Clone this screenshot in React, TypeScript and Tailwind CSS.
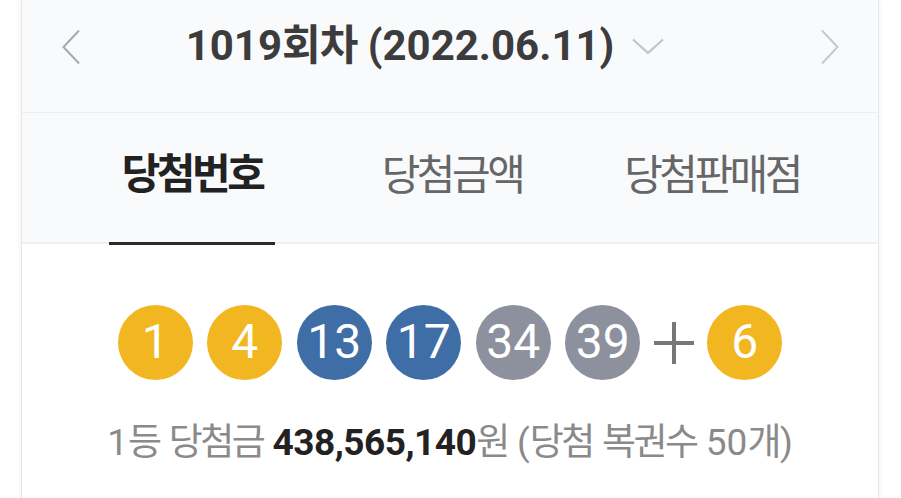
import React from "react";

const FONT = "font-['Roboto','Noto_Sans_CJK_KR',sans-serif]";

type Ball = { n: number; color: string };

const balls: Ball[] = [
  { n: 1, color: "bg-[#f2b720]" },
  { n: 4, color: "bg-[#f2b720]" },
  { n: 13, color: "bg-[#3f6ea7]" },
  { n: 17, color: "bg-[#3f6ea7]" },
  { n: 34, color: "bg-[#8d919d]" },
  { n: 39, color: "bg-[#8d919d]" },
];

function NumberBall({ n, color }: Ball) {
  return (
    <div
      className={`${color} w-[75px] h-[75px] rounded-full flex items-center justify-center text-white text-[48px] leading-none`}
    >
      <span className="-mt-[2px]">{n}</span>
    </div>
  );
}

function Kr({ children, ls }: { children: React.ReactNode; ls: string }) {
  return <span className={ls}>{children}</span>;
}

export default function App() {
  return (
    <div className={`${FONT} bg-white w-[901px] h-[498px] overflow-hidden`}>
      <div className="ml-[21px] w-[858px] h-full bg-white border-x border-[#e6e7e9] shadow-[0_0_6px_rgba(0,0,0,0.07)]">
        {/* round selector */}
        <div className="h-[113px] bg-[#f9fafc] border-b border-[#eceef1] flex items-center pl-[39px] pr-[38px] pb-[18px]">
          <svg width="20" height="36" viewBox="0 0 20 36" className="shrink-0">
            <path d="M18 1.5 L2.5 18 L18 34.5" fill="none" stroke="#a9a9a9" strokeWidth="2" />
          </svg>
          <div className="flex-1 flex items-center justify-center pr-[51px]">
            <span className="text-[42px] font-bold text-[#3c3c3c] leading-none -mt-[2px]">
              1019<Kr ls="tracking-[-1px]">회차</Kr> (2022.06.11)
            </span>
            <svg width="32" height="17" viewBox="0 0 32 17" className="ml-[18px] -mt-[2px]">
              <path d="M1 1.5 L16 15 L31 1.5" fill="none" stroke="#c4c4c4" strokeWidth="2.2" />
            </svg>
          </div>
          <svg width="20" height="36" viewBox="0 0 20 36" className="shrink-0">
            <path d="M2 1.5 L17.5 18 L2 34.5" fill="none" stroke="#c8c8c8" strokeWidth="2" />
          </svg>
        </div>

        {/* tabs */}
        <div className="h-[131px] bg-[#f9fafc] border-b-2 border-[#eef0f2] grid grid-cols-[260px_260px_260px] pl-[40px]">
          <div className="flex justify-center">
            <div className="flex items-center px-[13px] border-b-[3px] border-[#2b2b2b] -mb-[3px]">
              <span className="text-[42px] font-bold text-[#222] tracking-[-3.5px] leading-none -mt-[6px]">
                당첨번호
              </span>
            </div>
          </div>
          <div className="flex items-center justify-center">
            <span className="text-[42px] text-[#666] tracking-[-3.5px] leading-none -mt-[3px]">당첨금액</span>
          </div>
          <div className="flex items-center justify-center">
            <span className="text-[42px] text-[#666] tracking-[-3.5px] leading-none -mt-[3px]">당첨판매점</span>
          </div>
        </div>

        {/* numbers */}
        <div className="pt-[61px] flex flex-col items-center">
          <div className="flex items-center gap-[14.5px]">
            {balls.map((b) => (
              <NumberBall key={b.n} {...b} />
            ))}
            <svg width="40" height="42" viewBox="0 0 40 42" className="mx-[-1px]">
              <path d="M20 0 V42 M0 21 H40" stroke="#777" strokeWidth="4" />
            </svg>
            <NumberBall n={6} color="bg-[#f2b720]" />
          </div>

          <div className="mt-[43px] text-[37px] leading-[40px] text-[#8a8a8a] whitespace-nowrap">
            1<Kr ls="tracking-[-2.5px]">등</Kr> <Kr ls="tracking-[-2.5px]">당첨금</Kr>{" "}
            <span className="font-bold text-[#222] tracking-[-0.5px]">438,565,140</span>
            <Kr ls="tracking-[-2.5px]">원</Kr> (<Kr ls="tracking-[-2.5px]">당첨</Kr>{" "}
            <Kr ls="tracking-[-2.5px]">복권수</Kr> 50
            <Kr ls="tracking-[-1.5px]">개</Kr>)
          </div>
        </div>
      </div>
    </div>
  );
}
